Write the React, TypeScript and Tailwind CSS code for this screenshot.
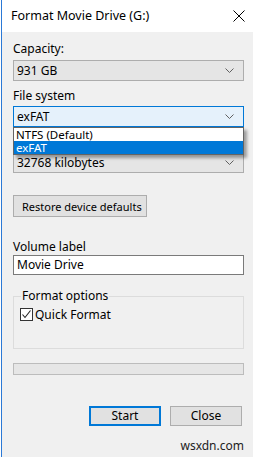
const font = { fontFamily: '"Noto Sans", "Open Sans", sans-serif' }

function Chevron() {
  return (
    <svg width="9" height="5" viewBox="0 0 9 5" className="shrink-0">
      <path d="M0.5 0.5 L4.5 4.5 L8.5 0.5" fill="none" stroke="#606060" strokeWidth="1" />
    </svg>
  )
}

function Combo({ value, focused }: { value: string; focused?: boolean }) {
  return (
    <div
      className={
        focused
          ? 'flex h-[21px] items-center justify-between border border-[#0078d7] bg-[#e5f1fb] pl-[3px] pr-[9px]'
          : 'flex h-[21px] items-center justify-between border border-[#adadad] bg-[#e5e5e5] pl-[3px] pr-[9px]'
      }
    >
      <span className="text-[12px] leading-none text-black">{value}</span>
      <Chevron />
    </div>
  )
}

function Label({ text }: { text: string }) {
  return <div className="h-[16px] text-[12px] leading-[16px] text-black">{text}</div>
}

export default function App() {
  return (
    <div
      className="relative flex h-[457px] w-[253px] overflow-hidden bg-[#f0f0f0] text-black"
      style={font}
    >
      <div className="w-[1px] shrink-0 bg-white" />
      <div className="w-[1px] shrink-0 bg-[#2b79d6]" />
      <div className="flex min-w-0 flex-1 flex-col">
        {/* title bar */}
        <div className="flex h-[32px] shrink-0 items-center justify-between bg-white pl-[9px] pr-[8px]">
          <span className="text-[12.5px] leading-none">Format Movie Drive (G:)</span>
          <svg width="12" height="12" viewBox="0 0 12 12">
            <path d="M0.5 0.5 L11.5 11.5 M11.5 0.5 L0.5 11.5" stroke="#000" strokeWidth="1" />
          </svg>
        </div>

        <div className="flex flex-col pl-[11px] pr-[9px] pt-[9px]">
          <Label text="Capacity:" />
          <div className="mt-[3px]">
            <Combo value="931 GB" />
          </div>

          <div className="mt-[7px]">
            <Label text="File system" />
          </div>
          <div className="relative mt-[2px]">
            <Combo value="exFAT" focused />
            {/* open dropdown list, covers the allocation unit label */}
            <div className="absolute left-0 right-0 top-[21px] z-10 flex flex-col border border-[#646464] bg-white shadow-[3px_3px_3px_rgba(0,0,0,0.35)]">
              <div className="h-[13px] overflow-hidden pl-[2px] text-[11.5px] leading-[13px]">NTFS (Default)</div>
              <div className="h-[13px] overflow-hidden bg-[#0078d7] pl-[2px] text-[11.5px] leading-[13px] text-white">
                exFAT
              </div>
            </div>
          </div>

          <div className="mt-[25px]">
            <Combo value="32768 kilobytes" />
          </div>

          <div className="mt-[22px] flex h-[22px] w-[134px] items-center whitespace-nowrap border border-[#adadad] bg-[#e1e1e1] pl-[8px] text-[11px] leading-none">
            Restore device defaults
          </div>

          <div className="mt-[22px]">
            <Label text="Volume label" />
          </div>
          <div className="flex h-[20px] items-center border border-[#7a7a7a] bg-white pl-[3px] text-[12px] leading-none">
            Movie Drive
          </div>

          {/* group box */}
          <div className="relative mt-[21px] h-[53px] border border-[#dcdcdc]">
            <span className="absolute left-[7px] top-[-9px] bg-[#f0f0f0] px-[1px] text-[12px] leading-[16px]">
              Format options
            </span>
            <div className="mt-[11px] flex items-center pl-[6px]">
              <div className="flex h-[13px] w-[13px] items-center justify-center border border-[#333] bg-white">
                <svg width="11" height="11" viewBox="0 0 11 11">
                  <path d="M1.5 5.5 L4 8.5 L9.5 1.5" fill="none" stroke="#222" strokeWidth="1.1" />
                </svg>
              </div>
              <span className="ml-[2px] text-[12px] leading-none">Quick Format</span>
            </div>
          </div>

          <div className="mt-[14px] h-[12px] border border-[#bcbcbc] bg-[#e6e6e6]" />

          <div className="mt-[31px] flex justify-end gap-[9px] pr-[2px]">
            <div className="flex h-[20px] w-[72px] items-center justify-center border-2 border-[#0078d7] bg-[#e1e1e1] text-[12px] leading-none">
              Start
            </div>
            <div className="flex h-[20px] w-[72px] items-center justify-center border border-[#adadad] bg-[#e1e1e1] text-[12px] leading-none">
              Close
            </div>
          </div>

          <div className="mt-[12px] text-right text-[12px] leading-[16px] text-[#222]">wsxdn.com</div>
        </div>
      </div>
    </div>
  )
}
